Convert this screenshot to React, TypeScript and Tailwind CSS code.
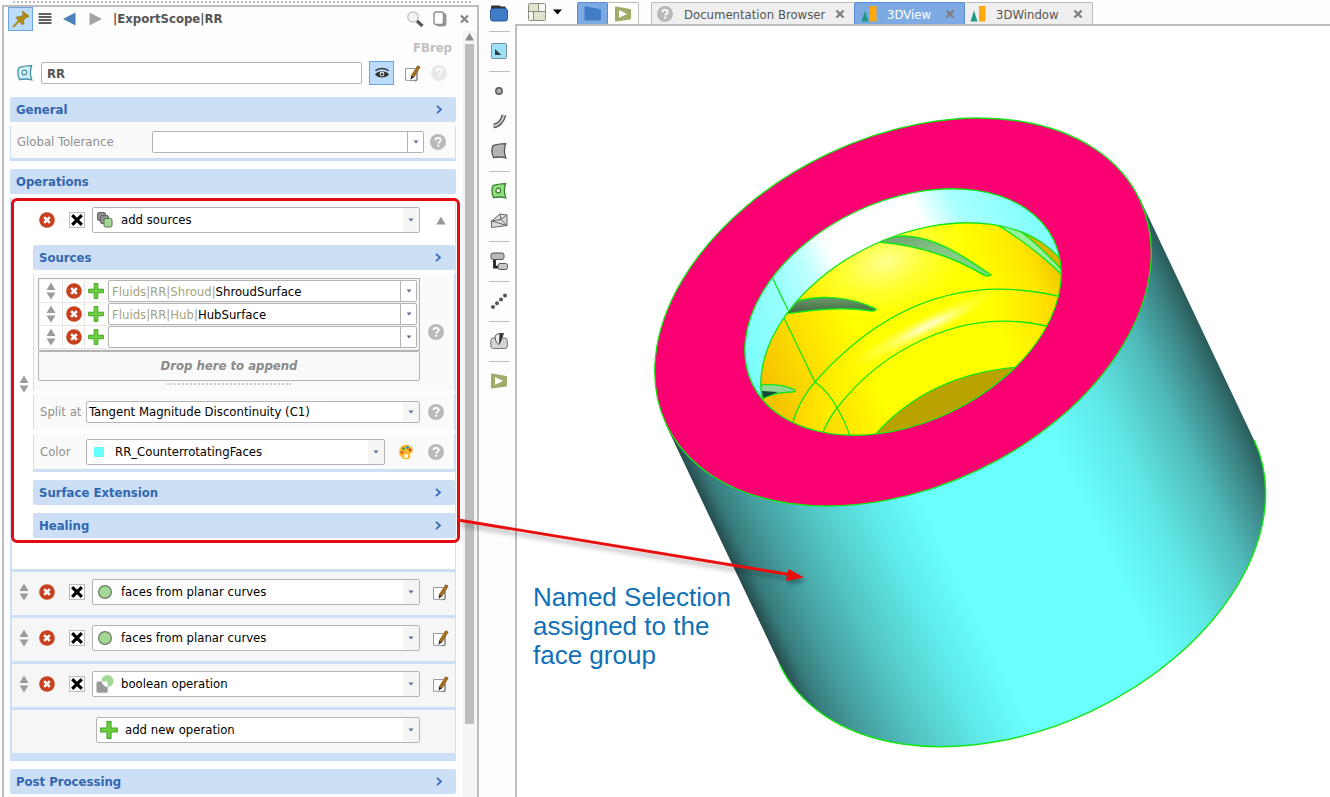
import React from 'react';

/* ---------- small icons ---------- */

const HelpIcon: React.FC<{ faded?: boolean }> = ({ faded }) => (
  <svg width="16" height="16" viewBox="0 0 16 16" className={faded ? 'shrink-0 opacity-30' : 'shrink-0'}>
    <circle cx="8" cy="8" r="8" fill="#b9b9b9" />
    <path d="M5.4 6.3c0-1.6 1.1-2.5 2.7-2.5s2.6.9 2.6 2.2c0 1.6-2.4 1.8-2.4 3.6" fill="none" stroke="#fff" strokeWidth="1.8" />
    <rect x="7.3" y="10.7" width="2" height="2" fill="#fff" />
  </svg>
);

const SortHandle = () => (
  <svg width="10" height="18" viewBox="0 0 10 18" className="shrink-0">
    <path d="M5 0.5L9.5 8h-9zM0.5 10.5h9L5 17.5z" fill="#9c9c9c" />
  </svg>
);

const DeleteIcon = () => (
  <svg width="16" height="16" viewBox="0 0 16 16">
    <circle cx="8" cy="8" r="7.8" fill="#c8411f" />
    <path d="M5.2 5.2l5.6 5.6M10.8 5.2l-5.6 5.6" stroke="#fff" strokeWidth="2.6" />
  </svg>
);

const PlusIcon: React.FC<{ size?: number }> = ({ size = 16 }) => (
  <svg width={size} height={size} viewBox="0 0 16 16" className="shrink-0">
    <path d="M6.2 0.6h3.6v5.6h5.6v3.6H9.8v5.6H6.2V9.8H0.6V6.2h5.6z" fill="#6bcf3f" stroke="#46a524" />
  </svg>
);

const EditIcon = () => (
  <svg width="17" height="17" viewBox="0 0 17 17">
    <path d="M1.5 3.5h9.5l2 2v9.5l-1 .8-10.5-.6z" fill="#fff" stroke="#999" />
    <path d="M13 8v7.5l-3-.4" fill="none" stroke="#777" />
    <path d="M13.6 0.8l2.6 1.2-6.2 10.2-3-1.2z" fill="#a8701c" stroke="#6e4712" strokeWidth="0.6" />
    <path d="M7 11l3 1.2-3.4 2.6z" fill="#222" />
  </svg>
);

const Chevron = () => (
  <svg width="7" height="9" viewBox="0 0 7 9">
    <path d="M1 0.8l4 3.7-4 3.7" fill="none" stroke="#3a6cb8" strokeWidth="1.8" />
  </svg>
);

const DownArrow = () => (
  <svg width="6" height="4" viewBox="0 0 6 4">
    <path d="M0.5 0.5h5L3 3.5z" fill="#5b6a98" />
  </svg>
);

const SurfaceIcon: React.FC<{ fill: string; stroke: string; dot?: boolean }> = ({ fill, stroke, dot }) => (
  <svg width="16" height="16" viewBox="0 0 16 16">
    <path d="M2 2.5C6 1.2 10 .9 14.6.7c-1.6 4.6-1.6 9.6.2 14.3-3-1-8-1.2-12.3-.4C.6 10.5.4 6.5 2 2.5z" fill={fill} stroke={stroke} strokeWidth="1.3" />
    {dot && <circle cx="7.3" cy="7.5" r="2.3" fill="#fff" stroke={stroke} strokeWidth="1.2" />}
  </svg>
);

const SourcesIcon = () => (
  <svg width="16" height="16" viewBox="0 0 16 16">
    <rect x="0.5" y="0.5" width="8" height="8" rx="1.5" fill="#8d8d8d" stroke="#666" />
    <rect x="3.5" y="3.5" width="8" height="8" rx="1.5" fill="#8d8d8d" stroke="#666" />
    <rect x="7" y="6.5" width="8" height="8.5" rx="1.5" fill="#a2d893" stroke="#55774c" />
  </svg>
);

const PlanarIcon = () => (
  <svg width="16" height="16" viewBox="0 0 16 16">
    <circle cx="8" cy="8" r="6.4" fill="#a2d893" stroke="#6b7a66" strokeWidth="1.2" />
  </svg>
);

const BooleanIcon = () => (
  <svg width="18" height="18" viewBox="0 0 18 18">
    <circle cx="11.5" cy="6" r="6" fill="#a2d893" />
    <path d="M0.5 8c0-.8.5-1.5 1.5-1.5h3.6c.6 3 2.9 5.2 6.1 5.5v4.5c0 .7-.5 1.2-1.2 1.2H2c-1 0-1.5-.5-1.5-1.2z" fill="#999" />
    <path d="M5.6 6.5h4.6c.9 0 1.5.7 1.5 1.5v4c-3.2-.3-5.500-2.5-6.1-5.5z" fill="#fff" />
  </svg>
);

const PaletteIcon = () => (
  <svg width="16" height="16" viewBox="0 0 16 16">
    <path d="M8 .8c4 0 6.8 2.4 6.8 5.4 0 2.3-1.6 2.9-2.6 3.5-.8.5.6 2 .2 3.6-.4 1.4-2 2.2-4.4 2C4 15 1.2 11.8 1.2 7.600 1.2 3.6 4 .8 8 .8z" fill="#fbb829" />
    <circle cx="5.5" cy="4.5" r="1.5" fill="#4d9e3a" />
    <circle cx="9.5" cy="3.5" r="1.4" fill="#3b7fcb" />
    <circle cx="12" cy="6" r="1.4" fill="#d43a2a" />
    <circle cx="4" cy="8.5" r="1.4" fill="#d4562a" />
    <circle cx="8.2" cy="12" r="1.9" fill="#fff" />
  </svg>
);

const PlayIcon = () => (
  <svg width="18" height="16" viewBox="0 0 18 16">
    <path d="M2 1.500l14 2.500v8.500l-14 2z" fill="#a1ac6b" stroke="#a1ac6b" strokeWidth="2" strokeLinejoin="round" />
    <path d="M5 4l8 4-8 3.800z" fill="#fff" />
  </svg>
);

const ChartIcon = () => (
  <svg width="16" height="17" viewBox="0 0 16 17" className="shrink-0">
    <path d="M4 5.500l3.500 11H0.500z" fill="#229a83" />
    <rect x="9" y="1" width="6.500" height="15.500" fill="#fda90a" />
  </svg>
);

const CloseIcon = () => (
  <svg width="10" height="10" viewBox="0 0 10 10">
    <path d="M1.5 1.5l7 7M8.5 1.5l-7 7" stroke="#7f7f7f" strokeWidth="2.4" />
  </svg>
);

/* ---------- form parts ---------- */

interface SelectBoxProps {
  id?: string;
  label: string;
  value: string;
  icon?: React.ReactNode;
  className: string;
  tall?: boolean;
}

const SelectBox: React.FC<SelectBoxProps> = ({ id, label, value, icon, className, tall }) => (
  <div className={`relative flex items-center rounded-xs border border-[#b4b4b4] bg-white ${tall ? 'h-[26px]' : 'h-[22px]'} ${className}`}>
    {icon && <span className="pointer-events-none absolute left-[3px] flex w-[18px] justify-center">{icon}</span>}
    <select
      id={id}
      aria-label={id ? undefined : label}
      defaultValue={value}
      className={`h-full w-full appearance-none bg-transparent pr-4 text-black outline-none ${icon ? 'pl-7' : 'pl-[2px]'}`}
    >
      <option>{value}</option>
    </select>
    <span className="pointer-events-none absolute inset-y-0 right-0 flex w-4 items-center justify-center bg-[#f5f5f5]">
      <DownArrow />
    </span>
  </div>
);

interface ComboInputProps {
  id?: string;
  label: string;
  prefix?: string;
  value?: string;
  className: string;
}

const ComboInput: React.FC<ComboInputProps> = ({ id, label, prefix, value, className }) => (
  <div className={`flex h-[22px] items-center rounded-xs border border-[#b4b4b4] bg-white ${className}`}>
    {prefix && <span className="pt-[2px] pl-[3px] text-[#a3a380]">{prefix}</span>}
    <input
      id={id}
      aria-label={id ? undefined : label}
      defaultValue={value}
      className="h-full min-w-0 flex-1 bg-transparent text-black outline-none"
    />
    <button type="button" aria-label={`Choose ${label}`} className="flex h-full w-4 items-center justify-center border-l border-[#b4b4b4]">
      <DownArrow />
    </button>
  </div>
);

const CrossBox: React.FC<{ label: string }> = ({ label }) => (
  <span className="relative flex size-4 shrink-0">
    <input type="checkbox" defaultChecked aria-label={label} className="size-4 appearance-none border border-[#bcbcbc] bg-white" />
    <svg width="16" height="16" viewBox="0 0 16 16" className="pointer-events-none absolute inset-0">
      <path d="M3.2 3.2l9.6 9.6M12.8 3.2l-9.6 9.6" stroke="#000" strokeWidth="3.2" />
    </svg>
  </span>
);

const SectionBar: React.FC<{ title: string; open?: boolean }> = ({ title, open = true }) => (
  <button type="button" className="flex h-[25px] w-full items-center justify-between rounded-xs bg-[#cddff5] pr-[13px] pl-[6px] font-bold text-[#3166b0]">
    {title}
    {open && <Chevron />}
  </button>
);

/* ---------- operations ---------- */

interface OperationHeadProps {
  name: string;
  icon: React.ReactNode;
  action: React.ReactNode;
}

const OperationHead: React.FC<OperationHeadProps> = ({ name, icon, action }) => (
  <div className="flex items-center pl-[6px]">
    <button type="button" aria-label={`Remove ${name}`} className="mr-[14px]">
      <DeleteIcon />
    </button>
    <CrossBox label={`Enable ${name}`} />
    <SelectBox label="Operation" value={name} icon={icon} tall className="ml-[7px] flex-1" />
    <button type="button" aria-label={`Edit ${name}`} className="mr-[2px] ml-2 flex w-[25px] justify-center">
      {action}
    </button>
  </div>
);

const sources = [
  { prefix: 'Fluids|RR|Shroud|', value: 'ShroudSurface' },
  { prefix: 'Fluids|RR|Hub|', value: 'HubSurface' },
  { prefix: '', value: '' },
];

const operations = [
  { name: 'faces from planar curves', icon: <PlanarIcon /> },
  { name: 'faces from planar curves', icon: <PlanarIcon /> },
  { name: 'boolean operation', icon: <BooleanIcon /> },
];

const SourcesOperation = () => (
  <div className="relative flex bg-white pb-[31px]">
    <div className="flex w-[21px] items-center justify-center pt-[31px] pl-[3px]">
      <SortHandle />
    </div>
    <div className="min-w-0 flex-1 pt-[9px]">
      <OperationHead
        name="add sources"
        icon={<SourcesIcon />}
        action={
          <svg width="10" height="9" viewBox="0 0 10 9">
            <path d="M5 0.5L9.7 8.5H0.3z" fill="#999" />
          </svg>
        }
      />
      <div className="mt-3">
        <SectionBar title="Sources" />
      </div>

      <div className="mt-1 flex items-center border-x border-x-[#cddff5] bg-[#fafafa] pt-1 pr-[10px] pb-[6px] pl-1">
        <div className="min-w-0 flex-1">
          <div className="border border-[#b4b4b4] bg-[#f3f3f3] p-px">
            {sources.map((s, i) => (
              <div key={i} className="flex h-[23px]">
                <span className="flex w-[23px] items-center justify-center border-r border-b border-[#e6e6e6] bg-white">
                  <SortHandle />
                </span>
                <button type="button" aria-label={`Remove source ${i + 1}`} className="flex w-[22px] items-center justify-center border-r border-b border-[#e6e6e6] bg-white">
                  <DeleteIcon />
                </button>
                <button type="button" aria-label={`Insert source ${i + 1}`} className="flex w-[23px] items-center justify-start border-b border-[#e6e6e6] bg-white pl-[3px]">
                  <PlusIcon />
                </button>
                <ComboInput label={`source ${i + 1}`} prefix={s.prefix} value={s.value} className="mr-px flex-1" />
              </div>
            ))}
          </div>
          <div className="flex h-[30px] items-center justify-center rounded-xs border border-[#b4b4b4] font-bold text-[#8a8a8a] italic">
            Drop here to append
          </div>
          <div className="mx-auto mt-[2px] w-[124px] border-b-2 border-dotted border-[#d2d2d2]" />
        </div>
        <span className="ml-2">
          <HelpIcon />
        </span>
      </div>

      <div className="mt-[3px] flex h-[36px] items-center border-x border-x-[#cddff5] bg-[#fafafa] pr-[10px] pl-[6px]">
        <label htmlFor="split-at" className="w-[46px] text-[#8f8f8f]">Split at</label>
        <SelectBox id="split-at" label="Split at" value="Tangent Magnitude Discontinuity (C1)" className="mr-2 flex-1" />
        <HelpIcon />
      </div>

      <div className="mt-1 flex h-[38px] items-center border-x border-b-[3px] border-[#cddff5] bg-[#fafafa] pr-[10px] pl-[6px]">
        <label htmlFor="face-color" className="w-[46px] text-[#8f8f8f]">Color</label>
        <SelectBox
          id="face-color"
          label="Color"
          value="RR_CounterrotatingFaces"
          icon={<span className="size-[10px] bg-[#66ffff]" />}
          tall
          className="flex-1"
        />
        <button type="button" aria-label="Pick color" className="mr-[14px] ml-[13px]">
          <PaletteIcon />
        </button>
        <HelpIcon />
      </div>

      <div className="mt-2 flex flex-col gap-2">
        <SectionBar title="Surface Extension" />
        <SectionBar title="Healing" />
      </div>
    </div>

    {/* highlighted group with a pointer into the 3D view */}
    <div className="pointer-events-none absolute top-0 -right-[5px] bottom-[26px] -left-px z-20 rounded-md border-[3px] border-[#e30b12]">
      <svg width="352" height="76" viewBox="0 0 352 76" className="absolute top-[315px] left-full max-w-none">
        <defs>
          <filter id="soft" x="-5%" y="-20%" width="110%" height="150%">
            <feDropShadow dx="2" dy="4" stdDeviation="2.5" floodColor="#000" floodOpacity="0.35" />
          </filter>
        </defs>
        <g filter="url(#soft)">
          <path d="M1 4L332 58.5" stroke="#e90a0a" strokeWidth="2.8" />
          <path d="M347 61.5L329 65l2.500-12z" fill="#e90a0a" />
        </g>
      </svg>
    </div>
  </div>
);

/* ---------- left property panel ---------- */

const PropertyPanel = () => (
  <aside className="flex w-[480px] shrink-0 flex-col">
    <div className="mr-2 ml-3 h-[5px] bg-[radial-gradient(#b5b5b5_0.7px,transparent_0.8px)] bg-size-[4px_4px]" />
    <div className="mr-px ml-[2px] flex flex-1 flex-col border-2 border-b-0 border-[#bdbdbd]">
      <header className="flex h-6 items-center pr-[8px] pl-1 text-[#555]">
        <button type="button" aria-label="Pin" className="flex h-6 w-[25px] items-center justify-center border border-[#6fa3e0] bg-[#bcdcfd]">
          <svg width="18" height="18" viewBox="0 0 18 18">
            <path d="M10.5 1l6.5 5-1.3 1.5-1.4-.2-2.6 2.900.2 3.600-1.700 1L4 7.800l1.200-1.300 3.300.3 2.700-2.500-.9-1.700z" fill="#b08c14" stroke="#8d7010" strokeWidth="0.6" />
            <path d="M7.5 10.500L1 17" stroke="#b08c14" strokeWidth="2" />
          </svg>
        </button>
        <button type="button" aria-label="Menu" className="ml-[5px]">
          <svg width="14" height="12" viewBox="0 0 14 12">
            <path d="M0.5 1h13M0.5 4h13M0.5 7h13M0.5 10h13" stroke="#2c2c2c" strokeWidth="1.7" />
          </svg>
        </button>
        <button type="button" aria-label="Back" className="ml-[11px]">
          <svg width="13" height="14" viewBox="0 0 13 14"><path d="M12.5 0.5v13L0 7z" fill="#4a7fb8" /></svg>
        </button>
        <button type="button" aria-label="Forward" className="ml-[13px]">
          <svg width="13" height="14" viewBox="0 0 13 14"><path d="M0.5 0.5v13L13 7z" fill="#a4a4a4" /></svg>
        </button>
        <h1 className="ml-[11px] flex-1 font-bold">|ExportScope|RR</h1>
        <button type="button" aria-label="Search">
          <svg width="18" height="18" viewBox="0 0 18 18">
            <circle cx="7" cy="7" r="5.2" fill="#f4f4f4" stroke="#bbb" strokeWidth="1.2" />
            <path d="M11 11l5.5 5" stroke="#555" strokeWidth="3.2" />
          </svg>
        </button>
        <button type="button" aria-label="Copy" className="ml-[9px]">
          <svg width="14" height="16" viewBox="0 0 14 16">
            <rect x="3.5" y="2.5" width="9.5" height="12.5" rx="2" fill="#999" stroke="#999" />
            <rect x="1" y="1" width="9.5" height="12.5" rx="2" fill="#fff" stroke="#8a8a8a" strokeWidth="1.4" />
          </svg>
        </button>
        <button type="button" aria-label="Close" className="ml-[13px]">
          <svg width="9" height="10" viewBox="0 0 9 10">
            <path d="M1 1.500l7 7M8 1.500l-7 7" stroke="#858585" strokeWidth="2.200" />
          </svg>
        </button>
      </header>

      <div className="flex flex-1">
        <div className="min-w-0 flex-1 px-[6px]">
          <p className="pt-[9px] pr-1 text-right leading-4 font-bold text-[#c0c0c0]">FBrep</p>
          <div className="mt-[5px] flex h-6 items-center pr-[9px] pl-[7px]">
            <SurfaceIcon fill="#d4eef5" stroke="#4391a8" dot />
            <input aria-label="Name" defaultValue="RR" className="ml-2 h-[22px] min-w-0 flex-1 rounded-xs border border-[#b4b4b4] bg-white px-[5px] font-bold text-[#555] outline-none" />
            <button type="button" aria-label="Toggle visibility" className="ml-[7px] flex h-6 w-[25px] items-center justify-center border border-[#6fa3e0] bg-[#bcdcfd]">
              <svg width="16" height="12" viewBox="0 0 16 12">
                <path d="M1.5 3.8C4.5.7 11.5.7 14.5 3.8" fill="none" stroke="#333" strokeWidth="1.6" />
                <path d="M1 7.5C4 3.2 12 3.2 15 7.5 12 11.5 4 11.5 1 7.5z" fill="#333" />
                <circle cx="8" cy="7" r="2.4" fill="#ddd" />
                <circle cx="8" cy="7.2" r="1.2" fill="#333" />
              </svg>
            </button>
            <button type="button" aria-label="Edit" className="mx-[10px]">
              <EditIcon />
            </button>
            <HelpIcon faded />
          </div>

          <div className="mt-3">
            <SectionBar title="General" />
          </div>
          <div className="mt-1 flex h-[35px] items-center border-x border-b-[3px] border-[#cddff5] bg-[#fafafa] pr-[9px] pl-[6px]">
            <label htmlFor="tolerance" className="w-[135px] text-[#8f8f8f]">Global Tolerance</label>
            <ComboInput id="tolerance" label="Global Tolerance" className="mr-[6px] flex-1" />
            <HelpIcon />
          </div>

          <div className="mt-2">
            <SectionBar title="Operations" open={false} />
          </div>
          <div className="mt-1 border-r border-b-8 border-l-2 border-[#cddff5]">
            <SourcesOperation />
            {operations.map((op, i) => (
              <div key={i} className="flex h-[46px] border-t-[3px] border-[#cddff5] bg-[#f6f6f6] pt-[7px]">
                <div className="flex h-[26px] w-[21px] items-center justify-center pl-[3px]">
                  <SortHandle />
                </div>
                <div className="min-w-0 flex-1">
                  <OperationHead name={op.name} icon={op.icon} action={<EditIcon />} />
                </div>
              </div>
            ))}
            <div className="h-[46px] border-t-[3px] border-[#cddff5] bg-[#f6f6f6] pt-[7px] pr-[35px] pl-[84px]">
              <SelectBox label="Add operation" value="add new operation" icon={<PlusIcon size={18} />} tall className="w-full" />
            </div>
          </div>

          <div className="mt-2">
            <SectionBar title="Post Processing" />
          </div>
        </div>

        {/* scrollbar */}
        <div className="flex w-[15px] flex-col items-center bg-[#f5f5f5]">
          <svg width="9" height="13" viewBox="0 0 9 13">
            <path d="M4.5 2L9 9.5H0z" fill="#8c8c8c" />
          </svg>
          <div className="h-[680px] w-[9px] bg-[#bdbdbd]" />
        </div>
      </div>
    </div>
  </aside>
);

/* ---------- icon strip ---------- */

const toolGroups = [
  {
    names: ['Plane'],
    icons: [
      <svg width="16" height="16" viewBox="0 0 16 16">
        <rect x="0.5" y="0.5" width="15" height="15" rx="1" fill="#9fe0f7" stroke="#6f8f9a" />
        <path d="M4 6v6h6.5z" fill="#2f3f46" />
      </svg>,
    ],
  },
  {
    names: ['Point', 'Curve', 'Surface'],
    icons: [
      <svg width="16" height="16" viewBox="0 0 16 16"><circle cx="8" cy="8" r="3.2" fill="#aaa" stroke="#555" strokeWidth="1.4" /></svg>,
      <svg width="16" height="16" viewBox="0 0 16 16">
        <path d="M2.5 12.8C7.5 12.5 11.5 8 13 2" fill="none" stroke="#555" strokeWidth="4.8" />
        <path d="M2.5 12.8C7.5 12.5 11.5 8 13 2" fill="none" stroke="#c4c4c4" strokeWidth="2.2" />
      </svg>,
      <SurfaceIcon fill="#b4b4b4" stroke="#555" />,
    ],
  },
  {
    names: ['Brep', 'Mesh'],
    icons: [
      <SurfaceIcon fill="#8fdd7d" stroke="#3b8032" dot />,
      <svg width="18" height="16" viewBox="0 0 18 16">
        <path d="M1.500 8L10 1l7 1v10.500L1.500 14.500z" fill="#dcdcdc" stroke="#666" />
        <path d="M1.500 8L11 6.500 17 12.500M10 1l1 5.500M11 6.500L17 2M1.500 8l15.500 4.500" fill="none" stroke="#666" />
      </svg>,
    ],
  },
  {
    names: ['Tree'],
    icons: [
      <svg width="18" height="18" viewBox="0 0 18 18">
        <path d="M4.5 7v8.2H9" fill="none" stroke="#222" strokeWidth="2.8" />
        <rect x="1" y="1" width="13" height="6.5" rx="2" fill="#b9b9b9" stroke="#555" />
        <rect x="8" y="11.5" width="9.5" height="6" rx="2" fill="#c9c9c9" stroke="#555" />
      </svg>,
    ],
  },
  {
    names: ['Points'],
    icons: [
      <svg width="18" height="18" viewBox="0 0 18 18" fill="#555">
        <circle cx="3" cy="15" r="2" /><circle cx="7" cy="11.3" r="2" /><circle cx="11" cy="7.5" r="2" /><circle cx="15" cy="3.5" r="2" />
      </svg>,
    ],
  },
  {
    names: ['Tool'],
    icons: [
      <svg width="18" height="18" viewBox="0 0 18 18">
        <rect x="0.8" y="6" width="16.5" height="10.5" rx="2.5" fill="#d5d5d5" stroke="#777" />
        <path d="M5 4c2.5-2.5 5-3 8.500-2.5-1.5 3-1.3 6-4.5 11-2.5-1.5-4-4-4-8.500z" fill="#eee" stroke="#555" />
        <path d="M9.500 1.600l4-.1c-1.5 3-1.3 6-4.5 11z" fill="#333" />
      </svg>,
    ],
  },
  { names: ['Run'], icons: [<PlayIcon />] },
];

const ToolStrip = () => (
  <nav aria-label="Tools" className="flex w-[35px] shrink-0 flex-col items-center pr-px pl-1">
    <button type="button" aria-label="Views" className="flex h-[26px] items-center">
      <svg width="18" height="17" viewBox="0 0 18 17">
        <path d="M1 6V2C1 1 1.500.5 2.500.5h7L11 1.500h4.500L16 6z" fill="#333" />
        <rect x="0.5" y="3.5" width="17" height="12.5" rx="2.5" fill="#407dc6" stroke="#2b5a96" />
      </svg>
    </button>
    {toolGroups.map((group) => (
      <div key={group.names[0]} className="flex flex-col items-center">
        <div className="flex h-[10px] w-[21px] items-center"><div className="h-px w-full bg-[#bdbdbd]" /></div>
        {group.icons.map((icon, i) => (
          <button key={group.names[i]} type="button" aria-label={group.names[i]} className="flex h-[30px] items-center">
            {icon}
          </button>
        ))}
      </div>
    ))}
  </nav>
);

/* ---------- viewer ---------- */

const TabBar = () => (
  <div className="flex h-6 items-end pl-[13px] text-[#555]">
    <button type="button" aria-label="Layout" className="flex h-[22px] w-[34px] items-center justify-between self-start pt-[2px]">
      <svg width="18" height="18" viewBox="0 0 18 18" className="shrink-0">
        <rect x="0.5" y="0.5" width="17" height="17" rx="1" fill="#e3e2cf" stroke="#8c8c80" />
        <path d="M11 1h6v7h-6zM1 9h4v8H1z" fill="#f8f8f2" />
        <path d="M10.5 1v7.500M0.5 8.5h17M5.5 8.5v9" stroke="#8c8c80" fill="none" />
      </svg>
      <svg width="9" height="6" viewBox="0 0 9 6"><path d="M0 0.5h9L4.5 5.5z" fill="#000" /></svg>
    </button>
    <button type="button" aria-label="Model view" className="ml-[15px] flex h-[22px] w-[31px] items-center justify-center rounded-t-xs border border-b-0 border-[#5b8bcf] bg-[#7eaae3]">
      <svg width="18" height="16" viewBox="0 0 18 16"><path d="M0.5 1.5c0-1 .5-1.5 1.5-1.3l13.5 2.8c1 .2 1.5.8 1.5 1.5V13c0 .8-.5 1.2-1.5 1.5H2c-1 0-1.5-.5-1.5-1.5z" fill="#407dc6" /></svg>
    </button>
    <button type="button" aria-label="Run view" className="flex h-[22px] w-[31px] items-center justify-center rounded-tr-xs border border-b-0 border-l-0 border-[#bdbdbd] bg-white">
      <PlayIcon />
    </button>
    <div role="tablist" className="ml-3 flex h-[22px] rounded-t-xs bg-[#efefef]">
      <div className="flex w-[203px] items-center rounded-tl-xs border-t border-l border-[#bdbdbd] pr-[9px] pl-[5px]">
        <HelpIcon />
        <button type="button" role="tab" aria-selected="false" className="ml-[11px] flex-1 pt-[3px] text-left whitespace-nowrap">Documentation Browser</button>
        <button type="button" aria-label="Close Documentation Browser"><CloseIcon /></button>
      </div>
      <div className="flex w-[111px] items-center rounded-t-xs border border-b-0 border-[#5b8bcf] bg-[#7eaae3] pr-[9px] pl-[6px] text-white">
        <ChartIcon />
        <button type="button" role="tab" aria-selected="true" className="ml-[10px] flex-1 pt-[3px] text-left">3DView</button>
        <button type="button" aria-label="Close 3DView"><CloseIcon /></button>
      </div>
      <div className="flex w-[128px] items-center rounded-tr-xs border-t border-r border-[#bdbdbd] pr-[9px] pl-[5px]">
        <ChartIcon />
        <button type="button" role="tab" aria-selected="false" className="ml-[10px] flex-1 pt-[3px] text-left">3DWindow</button>
        <button type="button" aria-label="Close 3DWindow"><CloseIcon /></button>
      </div>
    </div>
  </div>
);

const EDGE = '#14e614';

const Model = () => (
  <svg width="813" height="771" viewBox="517 26 813 771" className="block max-w-none" role="img" aria-label="Hollow cylinder with hub and shroud surfaces">
    <defs>
      <linearGradient id="shell" gradientUnits="userSpaceOnUse" x1="666" y1="425" x2="1140" y2="199">
        <stop offset="0" stopColor="#264c4d" />
        <stop offset="0.03" stopColor="#377b7c" />
        <stop offset="0.09" stopColor="#469f9f" />
        <stop offset="0.18" stopColor="#53c6c6" />
        <stop offset="0.29" stopColor="#60ebeb" />
        <stop offset="0.38" stopColor="#6affff" />
        <stop offset="0.65" stopColor="#6affff" />
        <stop offset="0.77" stopColor="#60e6e6" />
        <stop offset="0.88" stopColor="#4fb9b9" />
        <stop offset="0.96" stopColor="#3a8080" />
        <stop offset="1" stopColor="#2a5a5a" />
      </linearGradient>
      <linearGradient id="rim" gradientUnits="userSpaceOnUse" x1="750" y1="385" x2="1050" y2="240">
        <stop offset="0" stopColor="#78ffff" />
        <stop offset="0.2" stopColor="#98ffff" />
        <stop offset="0.31" stopColor="#c0ffff" />
        <stop offset="0.39" stopColor="#ffffff" />
        <stop offset="0.68" stopColor="#ffffff" />
        <stop offset="0.79" stopColor="#a8ffff" />
        <stop offset="1" stopColor="#80ffff" />
      </linearGradient>
      <linearGradient id="wall" gradientUnits="userSpaceOnUse" x1="762" y1="370" x2="1062" y2="250">
        <stop offset="0" stopColor="#f5c400" />
        <stop offset="0.18" stopColor="#ffe600" />
        <stop offset="0.32" stopColor="#ffff00" />
        <stop offset="0.72" stopColor="#ffff00" />
        <stop offset="0.88" stopColor="#ffe800" />
        <stop offset="1" stopColor="#eebc00" />
      </linearGradient>
      <linearGradient id="fillet" gradientUnits="userSpaceOnUse" x1="795" y1="0" x2="1057" y2="0">
        <stop offset="0" stopColor="#ffd400" />
        <stop offset="0.15" stopColor="#fff000" />
        <stop offset="0.3" stopColor="#ffff00" />
        <stop offset="0.75" stopColor="#ffff00" />
        <stop offset="1" stopColor="#ffd800" />
      </linearGradient>
      <radialGradient id="shine">
        <stop offset="0" stopColor="#fff" stopOpacity="0.7" />
        <stop offset="0.5" stopColor="#fff" stopOpacity="0.25" />
        <stop offset="1" stopColor="#fff" stopOpacity="0" />
      </radialGradient>
      <linearGradient id="bladeA" x1="0" y1="0" x2="0" y2="1">
        <stop offset="0" stopColor="#6f9a6c" />
        <stop offset="1" stopColor="#35603c" />
      </linearGradient>
      <linearGradient id="bladeB" x1="0" y1="0" x2="1" y2="1">
        <stop offset="0" stopColor="#6f9f70" />
        <stop offset="0.5" stopColor="#86c886" />
        <stop offset="1" stopColor="#7ee07a" />
      </linearGradient>
      <clipPath id="bore">
        <ellipse cx="903" cy="312" rx="167" ry="111" transform="rotate(-25.4 903 312)" />
      </clipPath>
      <clipPath id="inner">
        <ellipse cx="919" cy="346" rx="167" ry="111" transform="rotate(-25.4 919 346)" />
      </clipPath>
    </defs>

    {/* outer shell */}
    <path d="M666 425L780 665A262 175 -25.4 0 0 1254 440L1140 199Z" fill="url(#shell)" />
    <path d="M780 665A262 175 -25.4 0 0 1254 440" fill="none" stroke={EDGE} strokeWidth="1.5" />
    <ellipse cx="903" cy="312" rx="262" ry="175" transform="rotate(-25.4 903 312)" fill="#fa0073" stroke={EDGE} strokeWidth="1.3" />

    {/* bore */}
    <g clipPath="url(#bore)">
      <rect x="740" y="180" width="330" height="260" fill="url(#rim)" />
      <g clipPath="url(#inner)">
        <rect x="740" y="200" width="330" height="250" fill="url(#wall)" />
        <ellipse cx="885" cy="262" rx="85" ry="52" transform="rotate(-18 885 262)" fill="url(#shine)" opacity="0.8" />
        {/* fillet between hub and shroud */}
        <path d="M793 422C798 405 806 392 815 382C868 322 945 270 1057 296L1046 326C960 306 880 352 837 408Q829 418 823 432Z" fill="url(#fillet)" />
        <ellipse cx="922" cy="329" rx="82" ry="11" transform="rotate(-27 922 329)" fill="url(#shine)" />
        <ellipse cx="935" cy="322" rx="42" ry="8" transform="rotate(-22 935 322)" fill="url(#shine)" opacity="0.6" />
        <path d="M873 437C905 400 950 372 1020 367L1020 450H873Z" fill="#b9a300" stroke={EDGE} strokeWidth="1.3" />
        <path d="M1020 231Q1050 240 1062 262V272Q1040 246 1020 231Z" fill="#dcb400" />
        <path d="M996 224L1020 231Q1040 246 1062 270V275Q1035 248 996 224Z" fill="#96f29a" stroke={EDGE} strokeWidth="1.3" />
        <path d="M878 242Q888 236 904 236C935 237 962 255 991 275Q988 277 984 275C955 258 920 245 878 242Z" fill="url(#bladeB)" stroke={EDGE} strokeWidth="1.5" />
        <path d="M784 316L797 301C820 295 850 296 876 309Q876 311 872 311C840 306 815 310 784 314Z" fill="url(#bladeA)" stroke={EDGE} strokeWidth="1.5" />
        <path d="M761 385C775 384 785 385 795 390Q796 392 792 392Q775 392 762 399Z" fill="#93d793" stroke={EDGE} strokeWidth="1.3" />
        <path d="M762 391L778 392 763 398Z" fill="#0d4a3a" />
        <path d="M793 422C798 405 806 392 815 382C868 322 945 270 1057 296" fill="none" stroke={EDGE} strokeWidth="1.3" />
        <path d="M823 432Q829 418 837 408C880 352 960 306 1046 326" fill="none" stroke={EDGE} strokeWidth="1.3" />
        <path d="M784 318L815 382Q829 392 837 408Q844 419 850 436" fill="none" stroke={EDGE} strokeWidth="1.3" />
      </g>
      <ellipse cx="919" cy="346" rx="167" ry="111" transform="rotate(-25.4 919 346)" fill="none" stroke={EDGE} strokeWidth="1.3" />
      <path d="M772 277L788 310" stroke={EDGE} strokeWidth="1.3" />
    </g>
    <ellipse cx="903" cy="312" rx="167" ry="111" transform="rotate(-25.4 903 312)" fill="none" stroke={EDGE} strokeWidth="1.3" />
  </svg>
);

const Viewer = () => (
  <main className="flex min-w-0 flex-1 flex-col">
    <TabBar />
    <div className="relative flex-1 overflow-hidden border-t-2 border-l-2 border-[#bdbdbd] bg-white">
      <Model />
      <p className="absolute top-[557px] left-4 w-[210px] font-['Liberation_Sans',Arial,sans-serif] text-[26px] leading-[29px] text-[#1070b8]">
        Named Selection assigned to the face group
      </p>
    </div>
  </main>
);

const App: React.FC = () => (
  <div className="flex min-h-screen bg-[#fdfdfd] font-['DejaVu_Sans_Condensed','Noto_Sans',sans-serif] text-[13px] leading-4">
    <PropertyPanel />
    <ToolStrip />
    <Viewer />
  </div>
);

export default App;
